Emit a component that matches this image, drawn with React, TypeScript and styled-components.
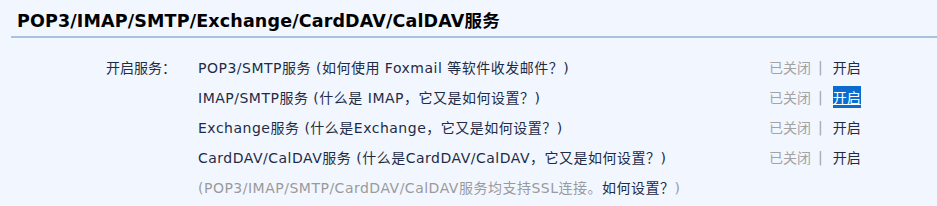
import React from 'react'
import styled, { createGlobalStyle } from 'styled-components'

const GlobalStyle = createGlobalStyle`
  html, body {
    margin: 0;
    padding: 0;
    background: #f2f7ff;
  }
  body {
    font-family: "DejaVu Sans", Verdana, "Noto Sans CJK SC", sans-serif;
    font-size: 14px;
    color: #1e2b45;
  }
`

type Service = {
  name: string
  help: string
  selected?: boolean
}

const services: Service[] = [
  { name: 'POP3/SMTP服务', help: '(如何使用 Foxmail 等软件收发邮件？)' },
  { name: 'IMAP/SMTP服务', help: '(什么是 IMAP，它又是如何设置？)', selected: true },
  { name: 'Exchange服务', help: '(什么是Exchange，它又是如何设置？)' },
  { name: 'CardDAV/CalDAV服务', help: '(什么是CardDAV/CalDAV，它又是如何设置？)' },
]

export default function App() {
  return (
    <>
      <GlobalStyle />
      <Page>
        <Header>
          <Title>POP3/IMAP/SMTP/Exchange/CardDAV/CalDAV服务</Title>
        </Header>
        <Body>
          {services.map((s, i) => (
            <Row key={s.name}>
              <Label>{i === 0 ? '开启服务：' : ''}</Label>
              <Content>
                {s.name} <Help>{s.help}</Help>
              </Content>
              <Actions>
                <Off>已关闭</Off>
                <Sep>|</Sep>
                <On $selected={s.selected}>开启</On>
              </Actions>
            </Row>
          ))}
          <Row>
            <Label />
            <Note>
              (POP3/IMAP/SMTP/CardDAV/CalDAV服务均支持SSL连接。<NoteLink>如何设置？</NoteLink>)
            </Note>
          </Row>
        </Body>
      </Page>
    </>
  )
}

const Page = styled.div`
  width: 937px;
  height: 206px;
  overflow: hidden;
`

const Header = styled.div`
  margin-left: 11px;
  height: 36px;
  border-bottom: 2px solid #a8c1e0;
  display: flex;
  align-items: center;
`

const Title = styled.div`
  padding-left: 6px;
  padding-top: 3px;
  font-size: 17.5px;
  font-weight: bold;
  color: #000;
  letter-spacing: 0.15px;
`

const Body = styled.div`
  padding-top: 14px;
  display: flex;
  flex-direction: column;
`

const Row = styled.div`
  display: flex;
  align-items: center;
  height: 30px;
`

const Label = styled.div`
  width: 176px;
  padding-right: 22px;
  text-align: right;
  white-space: nowrap;
`

const Content = styled.div`
  flex: 1;
  white-space: nowrap;
  letter-spacing: 0.5px;
`

const Help = styled.span``

const Actions = styled.div`
  display: flex;
  align-items: center;
  width: 168px;
`

const Off = styled.span`
  color: #a3a3a3;
`

const Sep = styled.span`
  color: #a3a3a3;
  margin: 0 10px 0 7px;
`

const On = styled.span<{ $selected?: boolean }>`
  color: ${p => (p.$selected ? '#fff' : '#1e2b45')};
  background: ${p => (p.$selected ? '#0a6ccf' : 'transparent')};
  text-decoration: ${p => (p.$selected ? 'underline' : 'none')};
  padding: 1px 0;
`

const Note = styled.div`
  color: #9a9a9a;
  white-space: nowrap;
  letter-spacing: 0.5px;
`

const NoteLink = styled.span`
  color: #1e2b45;
`
